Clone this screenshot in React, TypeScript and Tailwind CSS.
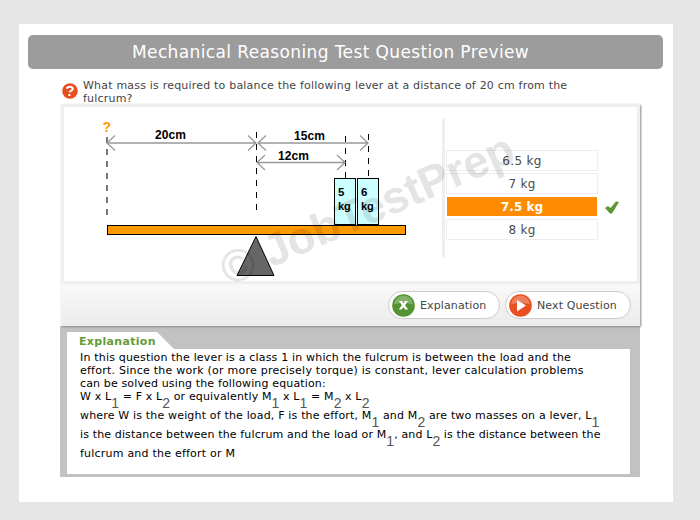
import React from "react";

const verdana = "font-['Verdana','DejaVu_Sans',sans-serif]";

function Sub({ children }: { children: React.ReactNode }) {
  return (
    <span className="relative top-[8px] font-['Liberation_Sans',Arial,sans-serif] text-[14px] leading-[0] tracking-normal text-[#555]">
      {children}
    </span>
  );
}

function Arrow({ x1, x2, y }: { x1: number; x2: number; y: number }) {
  return (
    <path
      d={`M${x1} ${y}H${x2}M${x1 + 8} ${y - 7.5}L${x1} ${y}L${x1 + 8} ${y + 7.5}M${x2 - 8} ${y - 7.5}L${x2} ${y}L${x2 - 8} ${y + 7.5}`}
      fill="none"
      stroke="#999"
      strokeWidth="1.3"
    />
  );
}

function Lever() {
  return (
    <svg
      width="379"
      height="174"
      viewBox="64 107 379 174"
      className="block shrink-0 font-['Liberation_Sans',Arial,sans-serif] font-bold"
    >
      <g stroke="#000" strokeWidth="1" fill="none">
        <path d="M107 137V217" stroke="#777" strokeWidth="2" strokeDasharray="6 6" />
        <path d="M256.5 132V211" strokeDasharray="6 6" />
        <path d="M345.5 136V178" strokeDasharray="6 6" />
        <path d="M368.5 134V178" strokeDasharray="6 6" />
      </g>
      <Arrow x1={107} x2={256} y={143} />
      <Arrow x1={258} x2={368} y={143} />
      <Arrow x1={257} x2={345} y={162.5} />
      <rect x="107.5" y="225.5" width="298" height="9" fill="#f90" stroke="#000" />
      <rect x="334.5" y="178.5" width="21" height="46" fill="#cff" stroke="#000" />
      <rect x="357.5" y="178.5" width="21" height="46" fill="#cff" stroke="#000" />
      <path d="M256 236.5L274 275.5H237Z" fill="#666" stroke="#000" />
      <text x="102.5" y="132" fontSize="14" fill="#f90">?</text>
      <g fontSize="12" fill="#000">
        <text x="155" y="139" textLength="31">20cm</text>
        <text x="294" y="140" textLength="31">15cm</text>
        <text x="278" y="160" textLength="31">12cm</text>
        <text x="338" y="196" fontSize="11.5">5</text>
        <text x="361" y="196" fontSize="11.5">6</text>
        <text x="338" y="210" fontSize="11">kg</text>
        <text x="361" y="210" fontSize="11">kg</text>
      </g>
    </svg>
  );
}

function Answer({ label, selected = false }: { label: string; selected?: boolean }) {
  return (
    <div className="flex items-center">
      <div
        className={
          selected
            ? "h-[21px] w-[152px] border border-white bg-[#ff8c00] bg-clip-padding text-center text-[12px] leading-[21px] font-bold text-white"
            : "h-[21px] w-[152px] border border-[#eee] text-center text-[12px] leading-[21px] tracking-[0.3px] text-[#4a4a4a]"
        }
      >
        {label}
      </div>
      {selected && (
        <svg width="14" height="14" viewBox="0 0 14 14" className="ml-[7px] shrink-0">
          <path d="M0 8L3 6L5.5 8L11 1.5L14 2L7 13.5H5Z" fill="#5a9632" />
        </svg>
      )}
    </div>
  );
}

function PillButton({ label, kind }: { label: string; kind: "close" | "next" }) {
  return (
    <button
      className={
        kind === "close"
          ? "flex h-7 w-[112px] items-center rounded-full border border-[#ccc] bg-white pl-[3px]"
          : "flex h-7 w-[126px] items-center rounded-full border border-[#ccc] bg-white pl-[3px]"
      }
    >
      <svg width="23" height="23" viewBox="0 0 23 23" className="shrink-0">
        <circle cx="11.5" cy="11.5" r="11.3" fill={kind === "close" ? "#559331" : "#e84e20"} />
        <path d="M2 10.5A9.5 9 0 0 1 21 10.5Q11.5 7 2 10.5Z" fill="#fff" opacity=".28" />
        {kind === "close" ? (
          <path d="M7 7H10.2L11.6 9.6L13.2 7H16L13 11.2L16.2 15.5H13L11.3 12.9L9.7 15.5H6.8L9.9 11.3Z" fill="#fff" />
        ) : (
          <path d="M8 6L17 11.5L8 17.5Z" fill="#fff" />
        )}
      </svg>
      <span className="ml-[5px] pt-px text-[11px] leading-none tracking-[0.12px] whitespace-nowrap text-[#444]">{label}</span>
    </button>
  );
}

export default function App() {
  return (
    <div className={`${verdana} h-[520px] w-[700px] overflow-hidden bg-[#e6e6e6] pt-6 pl-[19px]`}>
      <main className="h-[478px] w-[654px] bg-white pt-[11px]">
        <h1 className="ml-[9px] h-[34px] w-[635px] rounded-[5px] bg-[#9c9c9c] pl-[104px] text-[17px] leading-[34px] tracking-[0.38px] whitespace-nowrap text-white">
          Mechanical Reasoning Test Question Preview
        </h1>

        <div className="flex h-[35px] pl-[43px]">
          <svg width="16" height="16" viewBox="0 0 16 16" className="mt-[14px] shrink-0">
            <circle cx="8" cy="8" r="7.8" fill="#e84e20" />
            <path d="M5 5.8C5.4 3.3 10.8 3.1 10.8 5.8C10.8 7.6 8 7.4 7.7 9.4M7.4 11V13" fill="none" stroke="#fff" strokeWidth="2" />
          </svg>
          <p className="ml-[5px] pt-[10px] text-[11px] leading-[13px] tracking-[0.2px] whitespace-nowrap text-[#444]">
            What mass is required to balance the following lever at a distance of 20 cm from the
            <br />
            fulcrum?
          </p>
        </div>

        <section className="relative ml-[42px] h-[222px] w-[579px] border-[3px] border-b-0 border-[#efefef] shadow-[1px_1px_2px_#888]">
          <div className="flex h-[174px] bg-white">
            <Lever />
            <div className="mt-[11px] -ml-px h-[140px] w-[3px] bg-[#efefef]" />
            <div className="mt-[43px] ml-px flex flex-col gap-[2px]">
              <Answer label="6.5 kg" />
              <Answer label="7 kg" />
              <Answer label="7.5 kg" selected />
              <Answer label="8 kg" />
            </div>
          </div>
          <div className="-mx-[3px] flex h-[45px] justify-end gap-[5px] border-t-[3px] border-[#efefef] bg-linear-to-b from-[#f9f9f9] to-[#ebebeb] pt-[7px] pr-[9px]">
            <PillButton label="Explanation" kind="close" />
            <PillButton label="Next Question" kind="next" />
          </div>
          <svg
            width="573"
            height="180"
            viewBox="64 107 573 180"
            className="pointer-events-none absolute top-0 left-0 overflow-visible font-['Liberation_Sans',Arial,sans-serif]"
          >
            <g transform="translate(229 286) rotate(-23.5)" fontSize="45" fill="#000" opacity=".1">
              <text x="0" y="0" stroke="#000" strokeWidth="0.6">©</text>
              <text x="45.7" y="0" className="font-bold">JobTestPrep</text>
            </g>
          </svg>
        </section>

        <section className="ml-[41px] h-[151px] w-[580px] bg-[#c2c2c2] pt-[6px] pl-[7px]">
          <h2 className="h-[17px] w-[107px] bg-white pt-[3px] pl-[12px] text-[11px] leading-[13px] font-bold tracking-[0.32px] text-[#659b35] [clip-path:polygon(0_0,90px_0,107px_100%,0_100%)]">
            Explanation
          </h2>
          <div className="h-[125px] w-[563px] bg-white pt-[2px] pl-[13px] text-[11px] leading-[13px] whitespace-nowrap text-black">
            <p className="h-[13px] tracking-[0.18px]">In this question the lever is a class 1 in which the fulcrum is between the load and the</p>
            <p className="h-[13px] tracking-[0.24px]">effort. Since the work (or more precisely torque) is constant, lever calculation problems</p>
            <p className="h-[13px] tracking-[0.14px]">can be solved using the following equation:</p>
            <p className="h-[19px] tracking-[0.14px]">
              W x L<Sub>1</Sub> = F x L<Sub>2</Sub> or equivalently M<Sub>1</Sub> x L<Sub>1</Sub> = M<Sub>2</Sub> x L<Sub>2</Sub>
            </p>
            <p className="h-[19px] tracking-[0.17px]">
              where W is the weight of the load, F is the effort, M<Sub>1</Sub> and M<Sub>2</Sub> are two masses on a lever, L<Sub>1</Sub>
            </p>
            <p className="h-[19px] tracking-[0.135px]">
              is the distance between the fulcrum and the load or M<Sub>1</Sub>, and L<Sub>2</Sub> is the distance between the
            </p>
            <p className="h-[19px] tracking-[0.22px]">fulcrum and the effort or M</p>
          </div>
        </section>
      </main>
    </div>
  );
}
